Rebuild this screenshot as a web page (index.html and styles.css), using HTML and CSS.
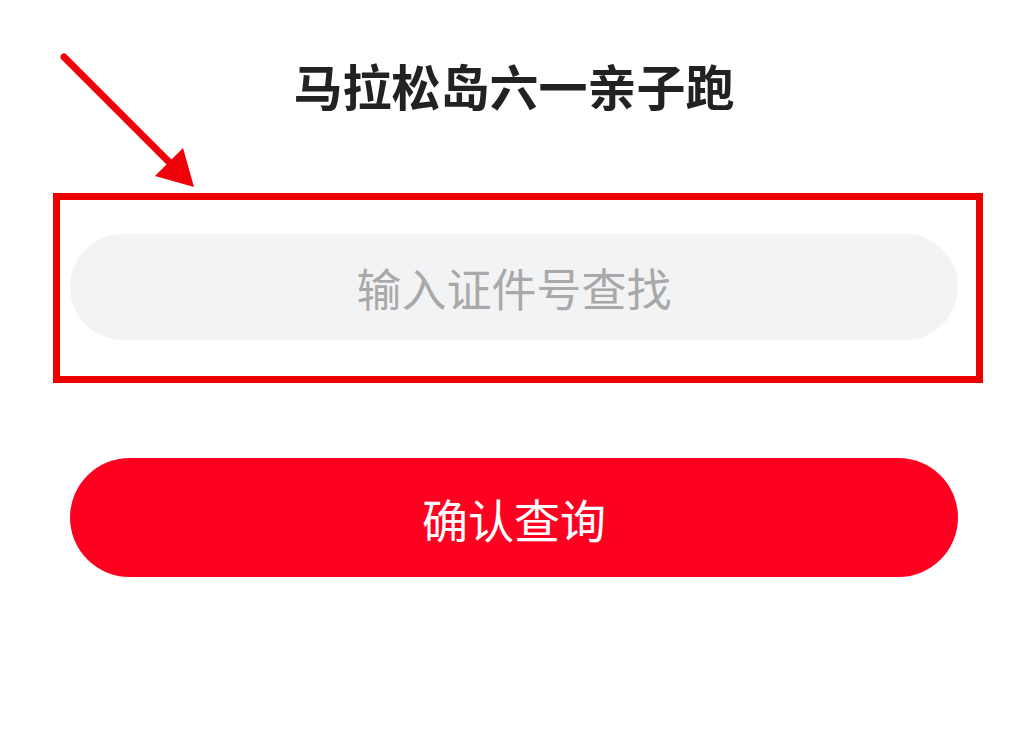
FILE: index.html
```html
<!DOCTYPE html>
<html lang="zh-CN">
<head>
  <meta charset="UTF-8">
  <meta name="viewport" content="width=device-width, initial-scale=1.0">
  <title>马拉松岛六一亲子跑</title>
  <link rel="stylesheet" href="styles.css">
</head>
<body>
  <div class="page">
    <h1 class="title">马拉松岛六一亲子跑</h1>

    <div class="highlight">
      <input class="search-input" type="text" name="idNumber" placeholder="输入证件号查找">
    </div>

    <button class="submit-btn" type="button">确认查询</button>
  </div>

  <svg class="arrow" width="220" height="200" viewBox="0 0 220 200">
    <line x1="64" y1="57" x2="174" y2="167" stroke="#f00008" stroke-width="7" stroke-linecap="round"/>
    <polygon points="155,176 183,148 194,187" fill="#f00008"/>
  </svg>
</body>
</html>
```

FILE: styles.css
```css
body {
  margin: 0;
  background: #ffffff;
  font-family: "Noto Sans CJK SC", "Noto Sans", sans-serif;
}
.page {
  width: 888px;
  padding: 57px 66px 0 70px;
  display: flex;
  flex-direction: column;
}
.title {
  margin: 0 0 80px;
  font-size: 49px;
  line-height: 56px;
  font-weight: 700;
  color: #222222;
  text-align: center;
}
.highlight {
  margin-left: -17px;
  width: 888px;
  padding: 34px 18px 36px 10px;
  border: 7px solid #ee0000;
}
.search-input {
  display: block;
  box-sizing: border-box;
  width: 888px;
  height: 106px;
  border: none;
  border-radius: 53px;
  background: #f2f3f5;
  font-family: inherit;
  font-size: 45px;
  text-align: center;
  color: #333;
  outline: none;
}
.search-input::placeholder {
  color: #a9a9a9;
}
.submit-btn {
  margin-top: 75px;
  width: 888px;
  height: 119px;
  border: none;
  border-radius: 60px;
  background: #fe0120;
  color: #ffffff;
  font-family: inherit;
  font-size: 46px;
  cursor: pointer;
}
.arrow {
  position: absolute;
  left: 0;
  top: 0;
}
```
